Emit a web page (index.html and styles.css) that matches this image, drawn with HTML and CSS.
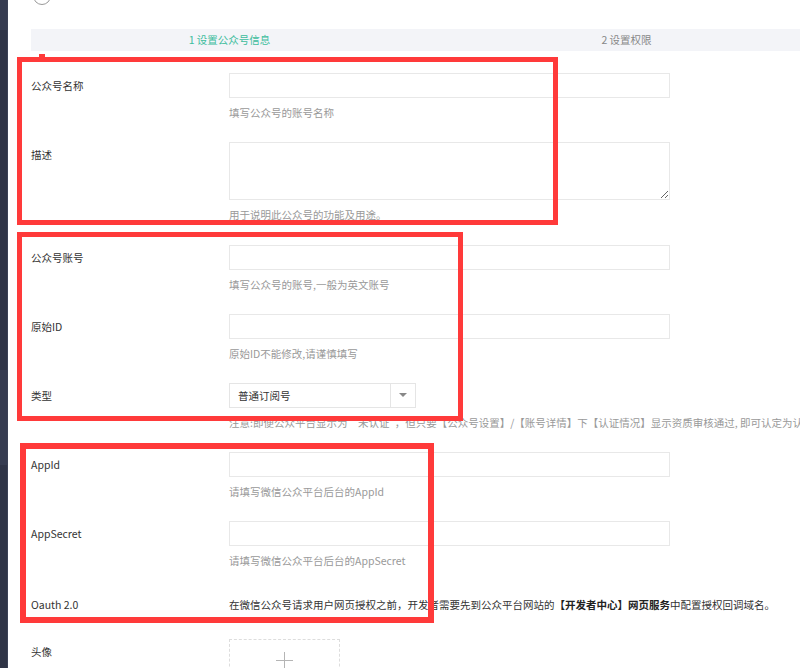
FILE: index.html
```html
<!DOCTYPE html>
<html lang="zh-CN">
<head>
    <meta charset="UTF-8">
    <meta name="viewport" content="width=device-width, initial-scale=1.0">
    <title>添加公众号</title>
    <link rel="stylesheet" href="styles.css">
</head>
<body>
    <div class="page">
        <div class="sidebar">
            <div class="sidebar-band band-1"></div>
            <div class="sidebar-band band-2"></div>
        </div>

        <div class="main">
            <div class="top">
                <span class="back-circle"></span>
            </div>

            <div class="steps">
                <div class="step active">1 设置公众号信息</div>
                <div class="step">2 设置权限</div>
            </div>

            <form class="form">
                <div class="form-group">
                    <label class="form-label">公众号名称</label>
                    <div class="form-control">
                        <input type="text" class="input">
                        <div class="help">填写公众号的账号名称</div>
                    </div>
                </div>

                <div class="form-group desc">
                    <label class="form-label">描述</label>
                    <div class="form-control">
                        <textarea class="input textarea"></textarea>
                        <div class="help">用于说明此公众号的功能及用途。</div>
                    </div>
                </div>

                <div class="form-group">
                    <label class="form-label">公众号账号</label>
                    <div class="form-control">
                        <input type="text" class="input">
                        <div class="help">填写公众号的账号,一般为英文账号</div>
                    </div>
                </div>

                <div class="form-group">
                    <label class="form-label">原始ID</label>
                    <div class="form-control">
                        <input type="text" class="input">
                        <div class="help">原始ID不能修改,请谨慎填写</div>
                    </div>
                </div>

                <div class="form-group">
                    <label class="form-label">类型</label>
                    <div class="form-control">
                        <div class="select">
                            <span class="select-value">普通订阅号</span>
                            <span class="select-arrow"></span>
                        </div>
                        <div class="help nowrap">注意:即便公众平台显示为“未认证”，但只要【公众号设置】/【账号详情】下【认证情况】显示资质审核通过, 即可认定为认证</div>
                    </div>
                </div>

                <div class="form-group">
                    <label class="form-label">AppId</label>
                    <div class="form-control">
                        <input type="text" class="input">
                        <div class="help">请填写微信公众平台后台的AppId</div>
                    </div>
                </div>

                <div class="form-group">
                    <label class="form-label">AppSecret</label>
                    <div class="form-control">
                        <input type="text" class="input">
                        <div class="help">请填写微信公众平台后台的AppSecret</div>
                    </div>
                </div>

                <div class="form-group oauth">
                    <label class="form-label">Oauth 2.0</label>
                    <div class="form-control">
                        <p class="static-text nowrap">在微信公众号请求用户网页授权之前，开发者需要先到公众平台网站的<b>【开发者中心】网页服务</b>中配置授权回调域名。</p>
                    </div>
                </div>

                <div class="form-group">
                    <label class="form-label">头像</label>
                    <div class="form-control">
                        <div class="upload">
                            <span class="plus"></span>
                        </div>
                    </div>
                </div>
            </form>
        </div>

        <!-- annotation frames drawn over the form -->
        <div class="mark mark-1"><span class="mark-tick"></span></div>
        <div class="mark mark-2"></div>
        <div class="mark mark-3"></div>
    </div>
</body>
</html>
```

FILE: styles.css
```css
* {
    margin: 0;
    padding: 0;
    box-sizing: border-box;
}

html, body {
    height: 100%;
}

body {
    font-family: "Noto Sans CJK SC", "Noto Sans", sans-serif;
    font-size: 10.5px;
    color: #333;
    background: #fff;
    overflow: hidden;
}

.page {
    position: relative;
    display: flex;
    height: 100%;
}

.sidebar {
    position: relative;
    width: 8px;
    flex-shrink: 0;
    background: #2f3446;
    border-right: 1px solid #3c4256;
}

.sidebar-band {
    position: absolute;
    left: 0;
    right: 0;
    background: #363c50;
}

.band-1 {
    top: 0;
    height: 30px;
}

.band-2 {
    top: 370px;
    height: 95px;
}

.main {
    flex: 1;
    padding-left: 23px;
    min-width: 0;
}

.top {
    height: 29px;
    position: relative;
    overflow: hidden;
}

.back-circle {
    position: absolute;
    left: 2px;
    top: -13px;
    width: 18px;
    height: 18px;
    border: 1.5px solid #9a9a9a;
    border-radius: 50%;
}

.steps {
    display: flex;
    width: 794px;
    height: 22px;
    background: #f3f4f8;
}

.step {
    flex: 1;
    text-align: center;
    line-height: 22px;
    color: #888;
}

.step.active {
    color: #3dbd9d;
}

.form {
    padding-top: 22px;
}

.form-group {
    display: flex;
    margin-bottom: 19px;
}

.form-group.desc {
    margin-bottom: 20px;
}

.form-label {
    width: 198px;
    flex-shrink: 0;
    line-height: 25px;
    color: #333;
}

.form-control {
    width: 441px;
}

.input {
    display: block;
    width: 441px;
    height: 25px;
    border: 1px solid #e8e8e8;
    background: #fff;
    font: inherit;
    outline: none;
}

.textarea {
    height: 58px;
    resize: vertical;
}

.help {
    margin-top: 5px;
    line-height: 20px;
    color: #999;
}

.nowrap {
    white-space: nowrap;
}

.select {
    display: flex;
    width: 187px;
    height: 25px;
    border: 1px solid #e5e5e5;
}

.select-value {
    flex: 1;
    padding-left: 8px;
    line-height: 23px;
    color: #333;
}

.select-arrow {
    width: 25px;
    border-left: 1px solid #e5e5e5;
    position: relative;
}

.select-arrow::after {
    content: "";
    position: absolute;
    left: 8px;
    top: 9px;
    border-left: 4px solid transparent;
    border-right: 4px solid transparent;
    border-top: 4px solid #888;
}

.oauth {
    margin-bottom: 22px;
}

.oauth .form-label {
    padding-top: 2px;
}

.static-text {
    line-height: 25px;
    padding-top: 2px;
    color: #333;
}

.static-text b {
    font-weight: bold;
    color: #222;
}

.upload {
    position: relative;
    width: 111px;
    height: 111px;
    border: 1px dashed #ddd;
}

.plus {
    position: absolute;
    left: 46px;
    top: 12px;
    width: 17px;
    height: 17px;
}

.plus::before,
.plus::after {
    content: "";
    position: absolute;
    background: #b5b5b5;
}

.plus::before {
    left: 8px;
    top: 0;
    width: 1px;
    height: 17px;
}

.plus::after {
    left: 0;
    top: 8px;
    width: 17px;
    height: 1px;
}

.mark {
    position: absolute;
    border: 5px solid #ff3a3a;
    pointer-events: none;
}

.mark-1 {
    left: 17px;
    top: 57px;
    width: 541px;
    height: 168px;
}

.mark-tick {
    position: absolute;
    left: 17px;
    top: -8px;
    width: 6px;
    height: 3px;
    background: #ff3a3a;
}

.mark-2 {
    left: 17px;
    top: 232px;
    width: 446px;
    height: 189px;
}

.mark-3 {
    left: 20px;
    top: 443px;
    width: 414px;
    height: 180px;
    border-width: 6px;
}
```
